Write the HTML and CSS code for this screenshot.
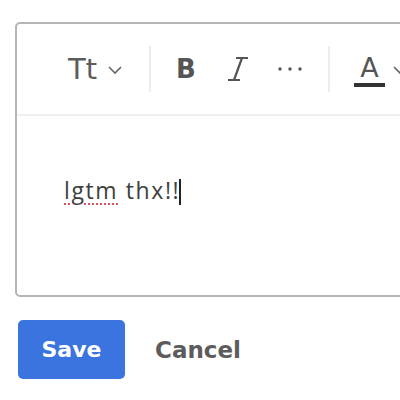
FILE: index.html
```html
<!DOCTYPE html>
<html lang="en">
<head>
    <meta charset="UTF-8">
    <meta name="viewport" content="width=device-width, initial-scale=1.0">
    <title>Edit comment</title>
    <link rel="stylesheet" href="styles.css">
</head>
<body>
    <div class="editor">
        <div class="toolbar">
            <span class="tool tt">Tt</span>
            <svg class="chev" width="16" height="10" viewBox="0 0 16 10"><path d="M2 2 L8 8 L14 2" fill="none" stroke="#666" stroke-width="1.6"/></svg>
            <span class="sep"></span>
            <span class="tool bold">B</span>
            <svg class="ital" width="22" height="26" viewBox="0 0 22 26"><path d="M9 2 H21 M1 24 H13 M15 2 L7 24" fill="none" stroke="#555" stroke-width="2.2"/></svg>
            <svg class="more" width="26" height="6" viewBox="0 0 26 6"><circle cx="3" cy="3" r="1.7" fill="#555"/><circle cx="13" cy="3" r="1.7" fill="#555"/><circle cx="23" cy="3" r="1.7" fill="#555"/></svg>
            <span class="sep sep2"></span>
            <span class="color">
                <span class="letter">A</span>
                <span class="bar"></span>
            </span>
            <svg class="chev chev2" width="16" height="10" viewBox="0 0 16 10"><path d="M2 2 L8 8 L14 2" fill="none" stroke="#666" stroke-width="1.6"/></svg>
        </div>
        <div class="content">
            <p class="line"><span class="typo">lgtm</span> thx!!<span class="caret"></span></p>
        </div>
    </div>
    <div class="actions">
        <button class="save">Save</button>
        <button class="cancel">Cancel</button>
    </div>
</body>
</html>
```

FILE: styles.css
```css
body {
    margin: 0;
    width: 400px;
    height: 400px;
    overflow: hidden;
    background: #fff;
    font-family: "Open Sans", Arial, sans-serif;
}
.editor {
    margin: 22px 0 0 15px;
    width: 420px;
    height: 275px;
    border: 2px solid #b5b5b5;
    border-radius: 5px;
    box-sizing: border-box;
}
.toolbar {
    display: flex;
    align-items: center;
    height: 90px;
    padding-left: 51px;
    border-bottom: 2px solid #efefef;
    color: #555;
    font-family: "DejaVu Sans", sans-serif;
}
.tool { line-height: 1; }
.tt {
    font-size: 29px;
    width: 33px;
    color: #5c5c5c;
}
.chev { margin-left: 6px; margin-top: 2px; }
.sep {
    width: 2px;
    height: 46px;
    background: #ececec;
    margin: 0 25px 0 26px;
}
.bold {
    font-size: 26px;
    font-weight: 700;
    width: 24px;
}
.ital { margin-left: 27px; }
.more { margin-left: 28px; }
.sep2 { margin-left: 25px; margin-right: 24px; }
.color {
    display: flex;
    flex-direction: column;
    align-items: center;
    width: 31px;
    margin-top: 4px;
}
.letter {
    font-size: 27px;
    line-height: 26px;
}
.bar {
    width: 31px;
    height: 4px;
    background: #333;
    margin-top: 2px;
}
.chev2 { margin-left: 7px; }
.content {
    padding: 60px 0 0 47px;
}
.line {
    margin: 0;
    font-size: 23px;
    letter-spacing: 1.6px;
    color: #404040;
    line-height: 28px;
}
.typo {
    text-decoration: underline dotted #e05060;
    text-decoration-thickness: 2px;
    text-underline-offset: 4px;
}
.caret {
    display: inline-block;
    width: 1.5px;
    height: 26px;
    background: #222;
    vertical-align: -6px;
    margin-left: -1px;
}
.actions {
    display: flex;
    align-items: center;
    margin: 23px 0 0 18px;
}
button {
    font-family: "DejaVu Sans", sans-serif;
    font-size: 22px;
    font-weight: 700;
    border: none;
    cursor: pointer;
}
.save {
    width: 107px;
    height: 59px;
    background: #3b74df;
    color: #fff;
    border-radius: 5px;
}
.cancel {
    background: none;
    color: #5c5c5c;
    font-size: 23px;
    margin-left: 22px;
    padding: 0 8px;
}
```
